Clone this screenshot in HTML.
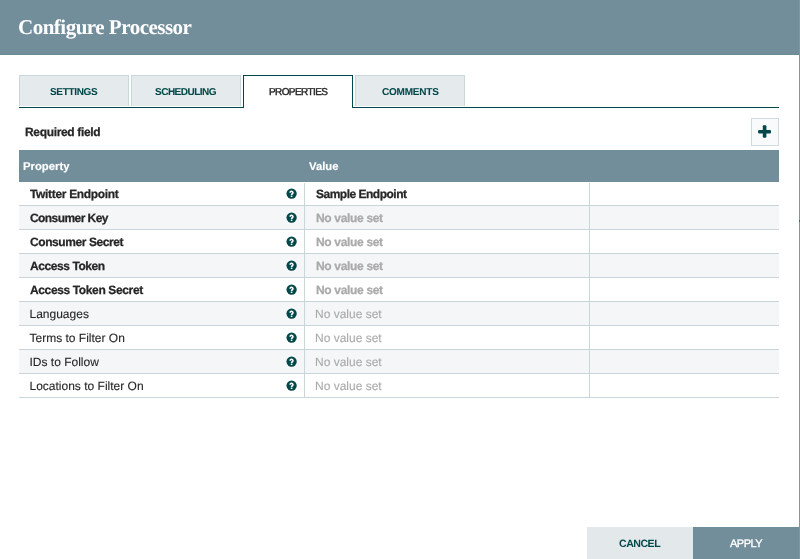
<!DOCTYPE html>
<html>
<head>
<meta charset="utf-8">
<style>
*{box-sizing:border-box;margin:0;padding:0}
html,body{width:800px;height:559px;overflow:hidden;background:#fff;font-family:"Liberation Sans",sans-serif}
.page{position:relative;will-change:transform;text-rendering:geometricPrecision;width:800px;height:559px;background:#fff;overflow:hidden}
.t{position:absolute;white-space:nowrap;line-height:1}
.hdr{position:absolute;left:0;top:0;width:800px;height:55px;background:#728e9b;border-bottom:1px solid #6c8996}
.title{left:18px;top:17px;font-family:"Liberation Serif",serif;font-weight:bold;font-size:21px;color:#fff;letter-spacing:-0.5px}
.rline{position:absolute;left:799px;top:0;width:1px;height:559px;background:#84959d}
.tabline{position:absolute;left:19px;top:107px;width:760px;height:1px;background:#004849}
.tab{position:absolute;top:75px;width:110px;height:31px;background:#e5eaed;border:1px solid #c9d7d9;border-bottom:none}
.tab.sel{background:#fff;border-color:#004849;height:33px}
.tabt{font-size:10px;font-weight:bold;color:#004849;top:88px;-webkit-text-stroke:0.05px #004849}
.tabt.sel{color:#262626;font-weight:normal;font-size:10px;-webkit-text-stroke:0.4px #262626}
.req{left:25px;top:126px;font-size:12px;letter-spacing:-0.34px;font-weight:bold;color:#262626;-webkit-text-stroke:0.25px #262626}
.plus{position:absolute;left:751px;top:118px;width:28px;height:28px;border:1px solid #cfdbde;background:#f9fafb}
.thead{position:absolute;left:19px;top:150px;width:760px;height:32px;background:#728e9b}
.th{color:#fff;font-size:11.3px;font-weight:bold;top:162px;-webkit-text-stroke:0.15px #fff}
.row{position:absolute;left:19px;width:760px;height:24px;border-bottom:1px solid #cad5d9;background:#fff}
.row.odd{background:#f4f6f7}
.d{position:absolute;top:183px;width:1px;height:214px;background:#cad5d9}
.n{font-size:12px;color:#262626;left:29.5px;-webkit-text-stroke:0.1px #262626}
.nb{font-size:12px;letter-spacing:-0.33px;font-weight:bold;color:#262626;left:30px;-webkit-text-stroke:0.25px #262626}
.unset{-webkit-text-stroke-color:#aaa}
.v{left:316px}
.n.v{left:315px}
.unset{color:#aaa}
.help{position:absolute;left:285px;width:13px;height:13px}
.btn{position:absolute;top:527px;height:32px}
.cancel{left:587px;width:106px;background:#e3e8eb}
.apply{left:693px;width:106px;background:#728e9b}
.bt{top:539px;font-size:10.6px;font-weight:bold;letter-spacing:-0.5px}
</style>
</head>
<body>
<div class="page">
  <div class="hdr"></div>
  <div class="t title">Configure Processor</div>

  <div class="tabline"></div>
  <div class="tab" style="left:19px"></div>
  <div class="tab" style="left:131px"></div>
  <div class="tab sel" style="left:243px"></div>
  <div class="tab" style="left:355px"></div>
  <div class="t tabt" style="left:50px;letter-spacing:-0.33px">SETTINGS</div>
  <div class="t tabt" style="left:155px;letter-spacing:-0.5px">SCHEDULING</div>
  <div class="t tabt sel" style="left:269px;letter-spacing:-0.6px">PROPERTIES</div>
  <div class="t tabt" style="left:382px;letter-spacing:-0.2px">COMMENTS</div>

  <div class="t req">Required field</div>
  <div class="plus"></div>
  <svg style="position:absolute;left:751px;top:118px" width="28" height="28" viewBox="751 118 28 28"><rect x="758.1" y="129.9" width="12.9" height="3.6" rx="1.1" fill="#004849"/><rect x="762.8" y="125.2" width="3.6" height="12.6" rx="1.1" fill="#004849"/></svg>

  <div class="thead"></div>
  <div class="t th" style="left:23px">Property</div>
  <div class="t th" style="left:309px">Value</div>

  <div class="row" style="top:182px"></div>
  <div class="row odd" style="top:206px"></div>
  <div class="row" style="top:230px"></div>
  <div class="row odd" style="top:254px"></div>
  <div class="row" style="top:278px"></div>
  <div class="row odd" style="top:302px"></div>
  <div class="row" style="top:326px"></div>
  <div class="row odd" style="top:350px"></div>
  <div class="row" style="top:374px"></div>
  <div class="d" style="left:304px"></div>
  <div class="d" style="left:589px"></div>

  <div class="t nb" style="top:188px">Twitter Endpoint</div>
  <div class="t nb" style="top:212px;letter-spacing:-0.57px">Consumer Key</div>
  <div class="t nb" style="top:236px;letter-spacing:-0.42px">Consumer Secret</div>
  <div class="t nb" style="top:260px;letter-spacing:-0.42px">Access Token</div>
  <div class="t nb" style="top:284px;letter-spacing:-0.37px">Access Token Secret</div>
  <div class="t n" style="top:308px">Languages</div>
  <div class="t n" style="top:332px">Terms to Filter On</div>
  <div class="t n" style="top:356px">IDs to Follow</div>
  <div class="t n" style="top:380px">Locations to Filter On</div>

  <div class="t nb v" style="top:188px;letter-spacing:-0.5px">Sample Endpoint</div>
  <div class="t nb v unset" style="top:212px">No value set</div>
  <div class="t nb v unset" style="top:236px">No value set</div>
  <div class="t nb v unset" style="top:260px">No value set</div>
  <div class="t nb v unset" style="top:284px">No value set</div>
  <div class="t n v unset" style="top:308px">No value set</div>
  <div class="t n v unset" style="top:332px">No value set</div>
  <div class="t n v unset" style="top:356px">No value set</div>
  <div class="t n v unset" style="top:380px">No value set</div>

  <svg class="help" style="top:187px" viewBox="0 0 13 13"><circle cx="6.6" cy="6.55" r="5.15" fill="#004849"/><path d="M5.15 5.7A1.4 1.35 0 1 1 7.35 6.75Q6.55 7.2 6.55 8" stroke="#fff" stroke-width="1.6" fill="none"/><rect x="5.8" y="8.55" width="1.55" height="1.45" fill="#fff"/></svg>
  <svg class="help" style="top:211px" viewBox="0 0 13 13"><circle cx="6.6" cy="6.55" r="5.15" fill="#004849"/><path d="M5.15 5.7A1.4 1.35 0 1 1 7.35 6.75Q6.55 7.2 6.55 8" stroke="#fff" stroke-width="1.6" fill="none"/><rect x="5.8" y="8.55" width="1.55" height="1.45" fill="#fff"/></svg>
  <svg class="help" style="top:235px" viewBox="0 0 13 13"><circle cx="6.6" cy="6.55" r="5.15" fill="#004849"/><path d="M5.15 5.7A1.4 1.35 0 1 1 7.35 6.75Q6.55 7.2 6.55 8" stroke="#fff" stroke-width="1.6" fill="none"/><rect x="5.8" y="8.55" width="1.55" height="1.45" fill="#fff"/></svg>
  <svg class="help" style="top:259px" viewBox="0 0 13 13"><circle cx="6.6" cy="6.55" r="5.15" fill="#004849"/><path d="M5.15 5.7A1.4 1.35 0 1 1 7.35 6.75Q6.55 7.2 6.55 8" stroke="#fff" stroke-width="1.6" fill="none"/><rect x="5.8" y="8.55" width="1.55" height="1.45" fill="#fff"/></svg>
  <svg class="help" style="top:283px" viewBox="0 0 13 13"><circle cx="6.6" cy="6.55" r="5.15" fill="#004849"/><path d="M5.15 5.7A1.4 1.35 0 1 1 7.35 6.75Q6.55 7.2 6.55 8" stroke="#fff" stroke-width="1.6" fill="none"/><rect x="5.8" y="8.55" width="1.55" height="1.45" fill="#fff"/></svg>
  <svg class="help" style="top:307px" viewBox="0 0 13 13"><circle cx="6.6" cy="6.55" r="5.15" fill="#004849"/><path d="M5.15 5.7A1.4 1.35 0 1 1 7.35 6.75Q6.55 7.2 6.55 8" stroke="#fff" stroke-width="1.6" fill="none"/><rect x="5.8" y="8.55" width="1.55" height="1.45" fill="#fff"/></svg>
  <svg class="help" style="top:331px" viewBox="0 0 13 13"><circle cx="6.6" cy="6.55" r="5.15" fill="#004849"/><path d="M5.15 5.7A1.4 1.35 0 1 1 7.35 6.75Q6.55 7.2 6.55 8" stroke="#fff" stroke-width="1.6" fill="none"/><rect x="5.8" y="8.55" width="1.55" height="1.45" fill="#fff"/></svg>
  <svg class="help" style="top:355px" viewBox="0 0 13 13"><circle cx="6.6" cy="6.55" r="5.15" fill="#004849"/><path d="M5.15 5.7A1.4 1.35 0 1 1 7.35 6.75Q6.55 7.2 6.55 8" stroke="#fff" stroke-width="1.6" fill="none"/><rect x="5.8" y="8.55" width="1.55" height="1.45" fill="#fff"/></svg>
  <svg class="help" style="top:379px" viewBox="0 0 13 13"><circle cx="6.6" cy="6.55" r="5.15" fill="#004849"/><path d="M5.15 5.7A1.4 1.35 0 1 1 7.35 6.75Q6.55 7.2 6.55 8" stroke="#fff" stroke-width="1.6" fill="none"/><rect x="5.8" y="8.55" width="1.55" height="1.45" fill="#fff"/></svg>

  <div class="btn cancel"></div>
  <div class="btn apply"></div>
  <div class="t bt" style="left:619px;color:#004849">CANCEL</div>
  <div class="t bt" style="left:730px;color:#fff;font-weight:normal;font-size:11px;-webkit-text-stroke:0.3px #fff">APPLY</div>
  <div class="rline"></div>
  <div style="position:absolute;left:799px;top:220px;width:1px;height:2px;background:#4f6068"></div>
</div>
</body>
</html>
